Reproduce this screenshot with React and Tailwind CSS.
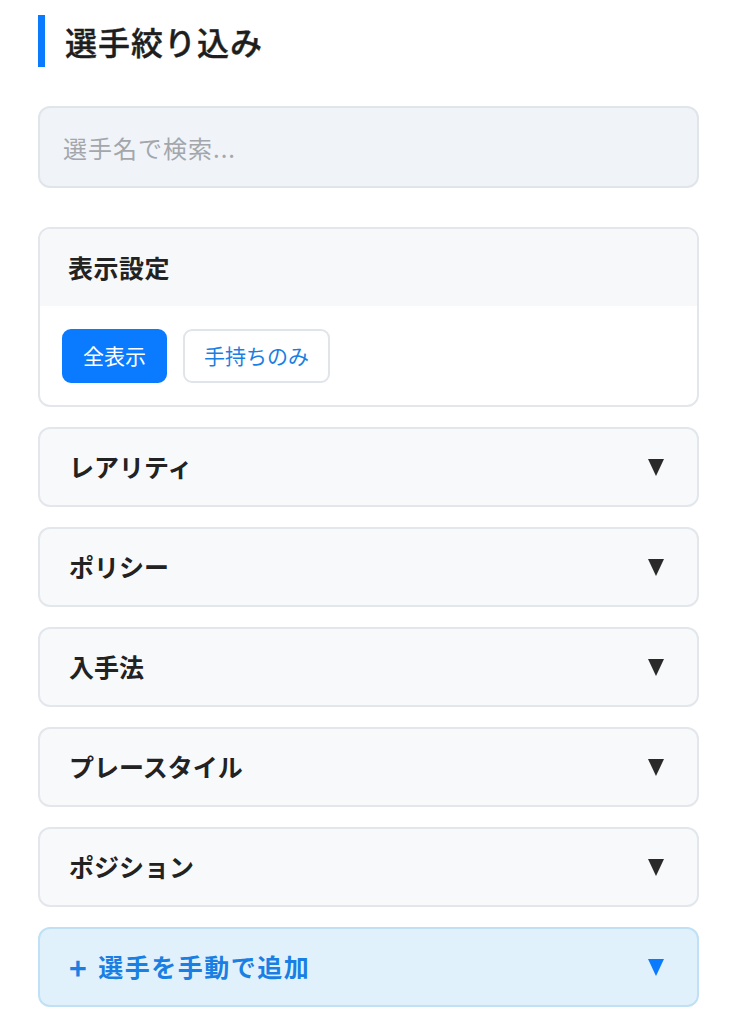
import { useState } from 'react';

const font = { fontFamily: '"Noto Sans CJK JP", "Noto Sans", sans-serif' };

function Caret({ className }) {
  return (
    <svg className={className} width="16" height="17" viewBox="0 0 16 17" fill="currentColor">
      <polygon points="0,0 16,0 8,17" />
    </svg>
  );
}

function Section({ label, accent }) {
  return (
    <div
      className={`h-[80px] flex items-center justify-between pl-[29px] pr-[33px] rounded-[12px] border-2 ${accent ? 'bg-[#e1f1fc] border-[#bfe0f5]' : 'bg-[#f8f9fb] border-[#e3e7ec]'}`}
    >
      <span className={`flex items-center text-[25px] font-bold ${accent ? 'text-[#1a7fe3] tracking-[1.5px]' : 'text-[#222]'}`}>
        {accent && <span className="mr-[10px] text-[30px] font-semibold leading-none">+</span>}
        {label}
      </span>
      <Caret className={accent ? 'text-[#0a7bff]' : 'text-[#2a2a2a]'} />
    </div>
  );
}

export default function App() {
  const [mode, setMode] = useState('all');
  const [query, setQuery] = useState('');

  return (
    <div className="bg-white min-h-screen px-[38px] pt-[15px] pb-[20px]" style={font}>
      {/* Title */}
      <div className="h-[52px] flex items-center border-l-[7px] border-[#0a7bff] pl-[20px]">
        <h1 className="text-[32px] font-medium text-[#1e1e1e] tracking-[1px] [-webkit-text-stroke:0.4px_#1e1e1e]">選手絞り込み</h1>
      </div>

      {/* Search */}
      <input
        value={query}
        onChange={(e) => setQuery(e.target.value)}
        placeholder="選手名で検索..."
        className="mt-[39px] w-full h-[82px] rounded-[12px] border-2 border-[#e0e5ea] bg-[#f0f4f8] px-[23px] text-[24px] tracking-[1px] text-[#222] placeholder:text-[#a3a7ab] outline-none"
      />

      {/* Display settings */}
      <div className="mt-[39px] rounded-[12px] border-2 border-[#e3e7ec] overflow-hidden">
        <div className="h-[77px] flex items-center px-[28px] bg-[#f7f8fa]">
          <span className="text-[25px] font-semibold text-[#222] tracking-[0.5px]">表示設定</span>
        </div>
        <div className="flex gap-[16px] px-[22px] pt-[23px] pb-[22px]">
          <button
            onClick={() => setMode('all')}
            className={`h-[54px] w-[105px] rounded-[9px] text-[21px] border-2 ${mode === 'all' ? 'bg-[#0a7bff] border-[#0a7bff] text-white' : 'bg-white border-[#e0e5ea] text-[#1a7fe3]'}`}
          >
            全表示
          </button>
          <button
            onClick={() => setMode('owned')}
            className={`h-[54px] w-[147px] rounded-[9px] text-[21px] border-2 ${mode === 'owned' ? 'bg-[#0a7bff] border-[#0a7bff] text-white' : 'bg-white border-[#e0e5ea] text-[#1a7fe3]'}`}
          >
            手持ちのみ
          </button>
        </div>
      </div>

      {/* Filter sections */}
      <div className="mt-[20px] flex flex-col gap-[20px]">
        <Section label="レアリティ" />
        <Section label="ポリシー" />
        <Section label="入手法" />
        <Section label="プレースタイル" />
        <Section label="ポジション" />
        <Section label="選手を手動で追加" accent />
      </div>
    </div>
  );
}
